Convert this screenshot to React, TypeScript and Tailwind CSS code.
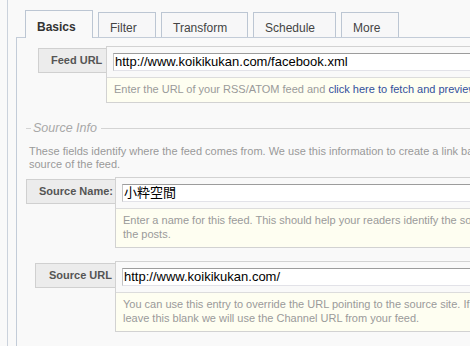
import React from 'react';

const tabs = [
  { name: 'Basics', w: 'w-[68px]', active: true },
  { name: 'Filter', w: 'w-[58px]' },
  { name: 'Transform', w: 'w-[87px]' },
  { name: 'Schedule', w: 'w-[83px]' },
  { name: 'More', w: 'w-[58px]' },
];

function Field({
  label,
  labelClass,
  value,
  children,
}: {
  label: string;
  labelClass: string;
  value: string;
  children: React.ReactNode;
}) {
  return (
    <div className="flex items-start">
      <div
        className={`mt-[2px] h-[25px] flex items-center border border-r-0 border-[#d0d0d0] bg-[#ececec] font-bold text-[11px] text-[#555] ${labelClass}`}
      >
        {label}
      </div>
      <div className="flex-1 border border-[#d2d2d2] bg-[#f9f9f9]">
        <div className="px-[6px] pt-[6px] pb-[6px]">
          <div className="h-[18px] bg-white border border-[#c4c4c4] border-t-[#9c9c9c] border-b-[#e2e2e8] flex items-center pl-[1px] text-[13px] text-black font-['Liberation_Sans','Noto_Sans_CJK_JP',sans-serif] whitespace-nowrap">
            {value}
          </div>
        </div>
        <div className="border-t border-[#dcdcdc] bg-[#fefef1] px-[7px] pt-[4px] pb-[6px] text-[11px] leading-[14px] text-[#9a9a9a] whitespace-nowrap">
          {children}
        </div>
      </div>
    </div>
  );
}

export default function App() {
  return (
    <div className="w-[470px] h-[346px] overflow-hidden bg-[#f9f9f9] font-['Liberation_Sans',sans-serif]">
      <div className="ml-[7px] h-full border-l border-[#cbd2dc] pl-[8px] pt-[10px] w-[800px]">
        {/* Tabs */}
        <div className="flex items-end gap-[5px] pl-[9px] h-[27px]">
          {tabs.map((t) =>
            t.active ? (
              <div
                key={t.name}
                className={`${t.w} h-[28px] -mb-px relative z-10 border border-b-0 border-[#bcc6d3] bg-[#f9f9f9] pl-[11px] pt-[7px] text-[12px] font-bold text-[#333]`}
              >
                {t.name}
              </div>
            ) : (
              <div
                key={t.name}
                className={`${t.w} h-[25px] border border-b-0 border-[#bcc6d3] bg-[#f7f7f8] pl-[11px] pt-[6px] text-[12px] text-[#444]`}
              >
                {t.name}
              </div>
            )
          )}
        </div>

        {/* Panel */}
        <div className="border-l border-t border-[#c3ccd8] h-full pt-[8px]">
          <div className="pl-[21px]">
            <Field label="Feed URL" labelClass="pl-[12px] w-[68px]" value="http://www.koikikukan.com/facebook.xml">
              Enter the URL of your RSS/ATOM feed and{' '}
              <span className="text-[#33509c]">click here to fetch and preview</span>
            </Field>
          </div>

          {/* Source Info fieldset */}
          <div className="mt-[18px] flex items-center pl-[9px] h-[14px]">
            <div className="w-[5px] h-px bg-[#d4d4d4]" />
            <span className="px-[2px] text-[12.5px] italic text-[#a8a8a8]">Source Info</span>
            <div className="flex-1 h-px bg-[#d4d4d4] ml-[2px]" />
          </div>
          <p className="mt-[10px] pl-[12px] text-[11px] leading-[13px] text-[#9a9a9a] whitespace-nowrap">
            These fields identify where the feed comes from. We use this information to create a link back to the
            <br />
            source of the feed.
          </p>

          <div className="mt-[6px] pl-[9px]">
            <Field label="Source Name:" labelClass="pl-[12px] w-[89px]" value="小粋空間">
              Enter a name for this feed. This should help your readers identify the source of
              <br />
              the posts.
            </Field>
          </div>

          <div className="mt-[13px] pl-[18px]">
            <Field label="Source URL" labelClass="pl-[13px] w-[80px]" value="http://www.koikikukan.com/">
              You can use this entry to override the URL pointing to the source site. If you
              <br />
              leave this blank we will use the Channel URL from your feed.
            </Field>
          </div>
        </div>
      </div>
    </div>
  );
}
